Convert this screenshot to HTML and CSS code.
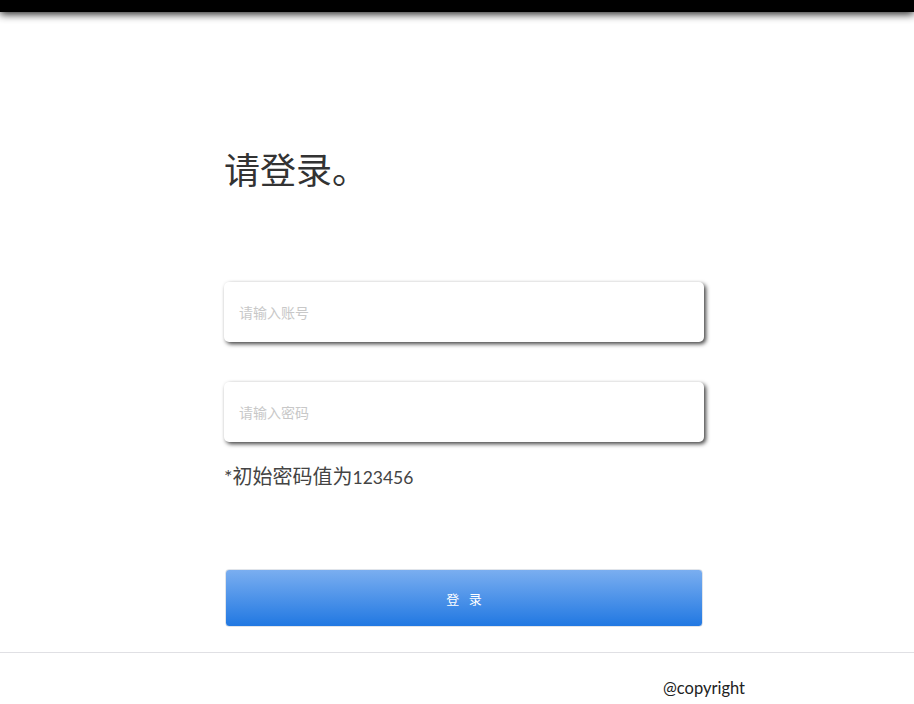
FILE: index.html
```html
<!DOCTYPE html>
<html lang="zh">
<head>
<meta charset="utf-8">
<title>登录</title>
<link rel="stylesheet" href="styles.css">
</head>
<body>
<header class="topbar"></header>
<main class="login">
  <h1 class="title">请登录。</h1>
  <form class="form">
    <input class="field" type="text" placeholder="请输入账号">
    <input class="field" type="password" placeholder="请输入密码">
    <p class="hint">*初始密码值为<span class="num">123456</span></p>
    <button class="submit" type="button">登 录</button>
  </form>
</main>
<footer class="footer">
  <span class="copy">@copyright</span>
</footer>
</body>
</html>
```
FILE: styles.css
```css
* { box-sizing: border-box; }
html, body { margin: 0; padding: 0; background: #fff; }
body {
  font-family: Lato, "Noto Sans CJK SC", sans-serif;
  color: #333;
  width: 914px;
  height: 704px;
  overflow: hidden;
}
.topbar {
  height: 12px;
  background: #000;
  box-shadow: 0 2px 8px rgba(0,0,0,0.9);
  position: relative;
  z-index: 1;
}
.login {
  width: 480px;
  margin-left: 224px;
  padding-top: 134px;
}
.title {
  margin: 0;
  font-size: 36px;
  font-weight: 400;
  line-height: 48px;
  color: #333;
}
.form {
  display: flex;
  flex-direction: column;
  margin-top: 88px;
}
.field {
  display: block;
  width: 480px;
  height: 60px;
  border: none;
  border-radius: 5px;
  background: #fff;
  box-shadow: 2px 2px 4px rgba(0,0,0,0.75);
  padding: 0 15px;
  font-family: Lato, "Noto Sans CJK SC", sans-serif;
  font-size: 14px;
  color: #333;
  outline: none;
  margin-bottom: 40px;
}
.field:nth-child(2) { margin-bottom: 20px; }
.field::placeholder { color: #c8c8c8; }
.hint {
  margin: 0;
  height: 28px;
  font-size: 20px;
  line-height: 28px;
  color: #444;
}
.num {
  font-size: 17.5px;
  line-height: 1;
}
.submit {
  margin-top: 79px;
  margin-left: 1px;
  width: 478px;
  height: 58px;
  border: 1px solid #e0e4ea;
  border-radius: 4px;
  background: linear-gradient(to bottom, #7aaef0, #2178e2);
  color: #fff;
  font-family: Lato, "Noto Sans CJK SC", sans-serif;
  font-size: 13px;
  letter-spacing: 3px;
  text-indent: 3px;
  cursor: pointer;
}
.footer {
  margin-top: 25px;
  border-top: 1px solid #e0e0e4;
  height: 60px;
}
.copy {
  display: block;
  margin-left: 663px;
  margin-top: 25px;
  font-size: 16.5px;
  color: #222;
}
```
